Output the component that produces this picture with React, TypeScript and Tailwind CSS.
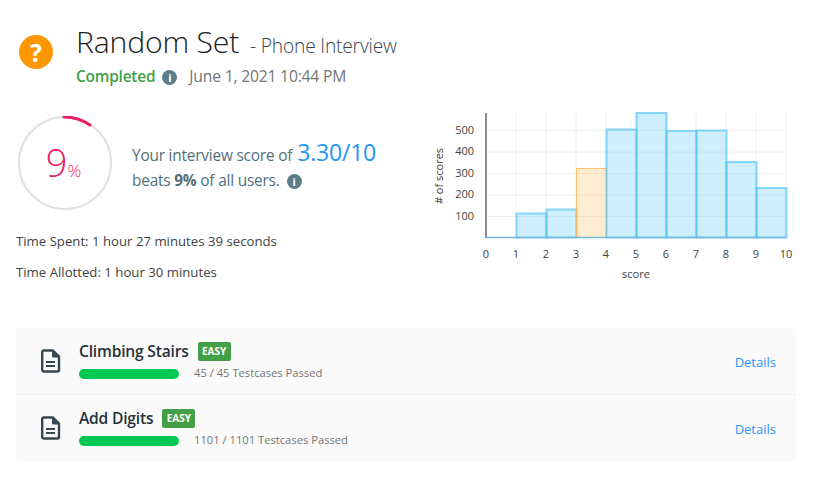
// Interview result page: header, score ring, histogram and question list.

const FONT = "font-['Open_Sans','Noto_Sans',sans-serif]";

const BARS = [
  { x: 0, top: 237.5 },
  { x: 1, top: 213.5 },
  { x: 2, top: 209.5 },
  { x: 3, top: 168.5, own: true },
  { x: 4, top: 129.5 },
  { x: 5, top: 113 },
  { x: 6, top: 131 },
  { x: 7, top: 130.5 },
  { x: 8, top: 162 },
  { x: 9, top: 188 },
];

const QUESTIONS = [
  { title: "Climbing Stairs", passed: "45 / 45 Testcases Passed" },
  { title: "Add Digits", passed: "1101 / 1101 Testcases Passed" },
];

export default function App() {
  return (
    <div className={`${FONT} h-[478px] w-[813px] overflow-hidden bg-white pl-4 pt-[21px] text-[#546e7a]`}>
      <Header />
      <div className="mt-[19px] flex h-[192px] w-[780px]">
        <ScoreSummary />
        <Histogram />
      </div>
      <ul className="mt-[29px] w-[780px] overflow-hidden rounded bg-[#fafafa]">
        {QUESTIONS.map((q, i) => (
          <QuestionRow key={q.title} {...q} divider={i > 0} />
        ))}
      </ul>
    </div>
  );
}

function Header() {
  return (
    <div className="flex h-[67px] items-start">
      <div className="mt-[14px] ml-[3px] flex h-[34px] w-[34px] items-center justify-center rounded-full bg-[#ff9800] text-[25px] leading-none font-bold text-white">
        ?
      </div>
      <div className="ml-[23px]">
        <h1 className="flex h-[42px] items-baseline whitespace-nowrap text-[#212121]">
          <span className="text-[30.2px] leading-[42px] font-light tracking-[-0.2px]">Random Set</span>
          <span className="ml-[11px] text-[19.2px] font-light tracking-[-0.2px] text-[#37474f]">- Phone Interview</span>
        </h1>
        <div className="mt-[2px] flex h-[24px] items-center tracking-[-0.2px]">
          <span className="text-[15.4px] font-semibold text-[#43a047]">Completed</span>
          <InfoDot className="ml-[7px]" />
          <span className="ml-[12px] text-[15.7px] text-[#757575]">June 1, 2021 10:44 PM</span>
        </div>
      </div>
    </div>
  );
}

function InfoDot({ className }: { className: string }) {
  return (
    <span className={`${className} flex h-[15px] w-[15px] items-center justify-center rounded-full bg-[#607d8b] text-[11px] leading-none font-bold text-white`}>
      i
    </span>
  );
}

function ScoreSummary() {
  return (
    <div className="w-[410px]">
      <div className="mt-[9px] flex items-center">
        <div className="relative ml-[2px] h-[94px] w-[94px]">
          <svg width="94" height="94" viewBox="0 0 94 94">
            <circle cx="47" cy="47" r="46" fill="none" stroke="#e0e0e0" strokeWidth="2" />
            <path d="M46 1 A46 46 0 0 1 72 9" fill="none" stroke="#e91e63" strokeWidth="3" strokeLinecap="round" />
          </svg>
          <div className="absolute inset-0 flex items-baseline justify-center pt-[23px] pr-[3px] font-light text-[#e91e63]">
            <span className="text-[38px] leading-[46px]">9</span>
            <span className="text-[17px]">%</span>
          </div>
        </div>
        <div className="mt-[5px] ml-[20px] tracking-[-0.2px]">
          <div className="-mt-[2px] flex h-[26px] items-baseline whitespace-nowrap text-[15.4px]">
            Your interview score of
            <span className="ml-[5px] text-[23px] text-[#2196f3]">3.30/10</span>
          </div>
          <div className="mt-[7px] flex h-[26px] items-center whitespace-nowrap text-[15.4px]">
            beats&nbsp;<b className="font-bold">9%</b>&nbsp;of all users.
            <InfoDot className="ml-[7px]" />
          </div>
        </div>
      </div>
      <p className="mt-[21px] text-[13.2px] leading-[20px] text-[#424242]">Time Spent: 1 hour 27 minutes 39 seconds</p>
      <p className="mt-[11px] text-[13.2px] leading-[20px] text-[#424242]">Time Allotted: 1 hour 30 minutes</p>
    </div>
  );
}

function Histogram() {
  // svg coordinates keep page y: the chart box starts at page (426, 107)
  const px = (n: number) => 60 + n * 30;
  return (
    <svg width="370" height="192" viewBox="0 107 370 192">
      {[1, 2, 3, 4, 5, 6, 7, 8, 9, 10].map((n) => (
        <line key={n} x1={px(n)} x2={px(n)} y1="113" y2="237" stroke="#f0f0f0" />
      ))}
      {[130.5, 152, 173.5, 195, 216.5].map((y) => (
        <line key={y} x1="60" x2="360" y1={y} y2={y} stroke="#eeeeee" />
      ))}
      {BARS.map((b) => (
        <rect
          key={b.x}
          x={px(b.x) + 0.5}
          y={b.top}
          width="30"
          height={237.5 - b.top}
          fill={b.own ? "#ffcc80" : "#81d4fa"}
          fillOpacity={b.own ? 0.36 : 0.38}
          stroke={b.own ? "#ffb74d" : "#4fc3f7"}
          strokeOpacity={b.own ? 0.8 : 0.65}
          strokeWidth={b.own ? 1 : 2}
        />
      ))}
      <line x1="60" x2="60" y1="113" y2="238" stroke="#8c8c8c" strokeWidth="2" />
      <line x1="60" x2="360" y1="237.5" y2="237.5" stroke="#74b8d8" strokeWidth="1.5" />
      <g fontSize="11" fill="#424242" fontFamily="'Open Sans', sans-serif">
        {[500, 400, 300, 200, 100].map((v, i) => (
          <text key={v} x="48" y={133.5 + i * 21.5} textAnchor="end">{v}</text>
        ))}
        {[0, 1, 2, 3, 4, 5, 6, 7, 8, 9, 10].map((n) => (
          <text key={n} x={px(n)} y="258" textAnchor="middle">{n}</text>
        ))}
        <text x="210" y="278" textAnchor="middle">score</text>
        <text transform="translate(17 176) rotate(-90)" textAnchor="middle"># of scores</text>
      </g>
    </svg>
  );
}

function QuestionRow({ title, passed, divider }: { title: string; passed: string; divider: boolean }) {
  return (
    <li className={`flex items-center pr-[20px] pl-[25px] ${divider ? "h-[67px] border-t border-[#f0f0f0]" : "h-[66px]"}`}>
      <svg width="20" height="24" viewBox="0 0 20 24" fill="none" stroke="#37474f" strokeWidth="2.4">
        <path d="M2.500 1.500h9.500l6 6v13.500a1.500 1.500 0 0 1-1.500 1.500H2.500A1.500 1.500 0 0 1 1.200 21V3A1.500 1.500 0 0 1 2.500 1.500Z" strokeLinejoin="round" />
        <path d="M11.500 2v6h6.500" fill="#37474f" strokeWidth="1" />
        <path d="M5 13h9M5 17h9" strokeWidth="2" />
      </svg>
      <div className="ml-[18px] flex-1">
        <div className="-mt-[2px] flex h-[24px] items-center">
          <span className="text-[15.6px] font-semibold tracking-[-0.2px] text-[#263238]">{title}</span>
          <span className="ml-[9px] flex h-[19px] w-[33px] items-center justify-center rounded-[2px] bg-[#43a047] text-[10px] font-bold text-white">EASY</span>
        </div>
        <div className="mt-[3px] flex h-[14px] items-center">
          <div className="h-[10px] w-[100px] rounded-full bg-[#00c853]" />
          <span className="ml-[15px] text-[11.2px] text-[#757575]">{passed}</span>
        </div>
      </div>
      <a className="mt-[3px] text-[13px] text-[#2a94ff]">Details</a>
    </li>
  );
}
